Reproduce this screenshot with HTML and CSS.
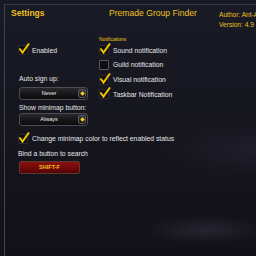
FILE: index.html
```html
<!DOCTYPE html>
<html>
<head>
<meta charset="utf-8">
<link rel="stylesheet" href="styles.css">
</head>
<body>
<div class="frame">
  <header class="head">
    <div class="h-settings">Settings</div>
    <div class="h-title">Premade Group Finder</div>
    <div class="h-meta">
      <div>Author: Ant-Audiophile</div>
      <div>Version: 4.9</div>
    </div>
  </header>
  <main class="main">
    <section class="col-left">
      <label class="check-row first">
        <span class="box checked"><svg viewBox="0 0 12 12"><path d="M1.5 5.5 L4.5 9.5 L11 0.5" fill="none" stroke="#f0c400" stroke-width="2"/></svg></span>
        <span class="txt">Enabled</span>
      </label>
      <div class="lbl lbl-auto">Auto sign up:</div>
      <div class="dropdown dd-first"><span class="dd-text">Never</span><span class="dd-btn"><svg viewBox="0 0 6 6"><path d="M3 0.3 L5.7 3 L3 5.7 L0.3 3Z" fill="#f2d21a"/></svg></span></div>
      <div class="lbl lbl-min">Show minimap button:</div>
      <div class="dropdown dd-second"><span class="dd-text">Always</span><span class="dd-btn"><svg viewBox="0 0 6 6"><path d="M3 0.3 L5.7 3 L3 5.7 L0.3 3Z" fill="#f2d21a"/></svg></span></div>
    </section>
    <section class="col-right">
      <div class="notif-label">Notifications</div>
      <label class="check-row">
        <span class="box checked"><svg viewBox="0 0 12 12"><path d="M1.5 5.5 L4.5 9.5 L11 0.5" fill="none" stroke="#f0c400" stroke-width="2"/></svg></span>
        <span class="txt">Sound notification</span>
      </label>
      <label class="check-row">
        <span class="box"></span>
        <span class="txt">Guild notification</span>
      </label>
      <label class="check-row">
        <span class="box checked"><svg viewBox="0 0 12 12"><path d="M1.5 5.5 L4.5 9.5 L11 0.5" fill="none" stroke="#f0c400" stroke-width="2"/></svg></span>
        <span class="txt">Visual notification</span>
      </label>
      <label class="check-row">
        <span class="box checked"><svg viewBox="0 0 12 12"><path d="M1.5 5.5 L4.5 9.5 L11 0.5" fill="none" stroke="#f0c400" stroke-width="2"/></svg></span>
        <span class="txt">Taskbar Notification</span>
      </label>
    </section>
  </main>
  <section class="lower">
    <label class="check-row">
      <span class="box checked"><svg viewBox="0 0 12 12"><path d="M1.5 5.5 L4.5 9.5 L11 0.5" fill="none" stroke="#f0c400" stroke-width="2"/></svg></span>
      <span class="txt">Change minimap color to reflect enabled status</span>
    </label>
    <div class="lbl lbl-bind">Bind a button to search</div>
    <div class="bind-btn">SHIFT-F</div>
  </section>
</div>
</body>
</html>
```
FILE: styles.css
```css
html, body {
  margin: 0;
  padding: 0;
}
body {
  width: 256px;
  height: 256px;
  overflow: hidden;
  font-family: "Liberation Sans", Arial, sans-serif;
  background:
    radial-gradient(ellipse 60px 14px at 205px 230px, rgba(60,52,72,0.5), rgba(0,0,0,0) 100%),
    radial-gradient(ellipse 90px 30px at 250px 150px, rgba(40,38,56,0.45), rgba(0,0,0,0) 100%),
    linear-gradient(180deg, #181a25 0%, #16161f 45%, #121118 100%);
}
.frame {
  margin: 4px 0 0 4px;
  height: 252px;
  border-top: 1px solid #34343e;
  border-left: 1px solid #44444e;
  box-sizing: border-box;
  overflow: hidden;
}
.head {
  display: grid;
  grid-template-columns: 104px 110px 1fr;
  height: 26px;
  padding-top: 2px;
  box-sizing: border-box;
  color: #eec21c;
  white-space: nowrap;
}
.h-settings {
  padding-left: 6px;
  font-size: 8.5px;
  font-weight: bold;
  line-height: 12px;
}
.h-title {
  font-size: 8.6px;
  line-height: 12px;
}
.h-meta {
  font-size: 6.6px;
  line-height: 10px;
  padding-top: 3px;
  overflow: hidden;
}
.main {
  display: grid;
  grid-template-columns: 81px 1fr;
  padding-left: 13px;
  margin-top: 5px;
}
.notif-label {
  color: #eec21c;
  font-size: 5px;
  line-height: 7px;
  height: 7px;
}
.check-row {
  display: flex;
  align-items: center;
  height: 14.67px;
  color: #e6e6e6;
  white-space: nowrap;
}
.col-left .check-row.first {
  margin-top: 7px;
}
.box {
  position: relative;
  width: 8px;
  height: 8px;
  flex: none;
  background: #0d0d12;
  border: 1px solid #55555e;
  border-radius: 1px;
  margin-right: 4px;
}
.box.checked {
  border-color: #2a2a30;
}
.box svg {
  position: absolute;
  left: -1px;
  top: -3px;
  width: 12px;
  height: 12px;
}
.txt {
  font-size: 6.8px;
}
.lbl {
  color: #e6e6e6;
  font-size: 6.8px;
  line-height: 8px;
  white-space: nowrap;
}
.lbl-auto {
  margin-top: 17px;
  padding-left: 1px;
}
.lbl-min {
  margin-top: 4px;
  padding-left: 1px;
}
.dropdown {
  display: flex;
  align-items: center;
  width: 69px;
  height: 13px;
  margin-left: 1px;
  box-sizing: border-box;
  border: 1px solid #4c4c52;
  border-radius: 3px;
  background: linear-gradient(180deg, #2a2a2e 0%, #151517 60%, #0c0c0e 100%);
}
.dd-first {
  margin-top: 4px;
}
.dd-second {
  margin-top: 1px;
}
.dd-text {
  flex: 1;
  text-align: center;
  color: #f0f0f0;
  font-size: 5.5px;
}
.dd-btn {
  display: flex;
  align-items: center;
  justify-content: center;
  width: 8px;
  height: 9px;
  margin-right: 1px;
  border-radius: 2px;
  background: linear-gradient(180deg, #3a3a3e, #1a1a1c);
  border: 1px solid #55555a;
  box-sizing: border-box;
}
.dd-btn svg {
  width: 5px;
  height: 5px;
}
.lower {
  padding-left: 13px;
  margin-top: 6px;
}
.lbl-bind {
  margin-top: 4px;
}
.bind-btn {
  width: 61px;
  height: 13px;
  margin-top: 3px;
  margin-left: 1px;
  box-sizing: border-box;
  border: 1px solid #5a3a30;
  border-radius: 2px;
  background: linear-gradient(180deg, #8c1010 0%, #6e0808 60%, #520404 100%);
  color: #f2c41c;
  font-size: 5.5px;
  font-weight: bold;
  line-height: 11px;
  text-align: center;
}
```
